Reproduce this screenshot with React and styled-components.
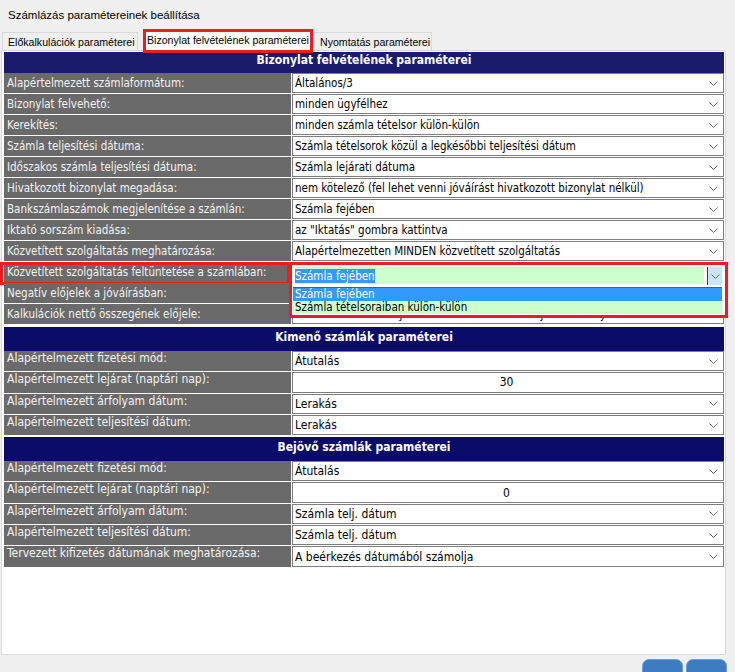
import React from 'react'
import styled, { createGlobalStyle } from 'styled-components'

const GlobalStyle = createGlobalStyle`
  html, body {
    margin: 0;
    padding: 0;
    background: #f0f0f0;
  }
  body {
    font-family: "Liberation Sans", Arial, sans-serif;
    color: #000;
  }
`

const tahoma = `"DejaVu Sans Condensed", "DejaVu Sans", sans-serif`

const invoiceRows = [
  ['Alapértelmezett számlaformátum:', 'Általános/3'],
  ['Bizonylat felvehető:', 'minden ügyfélhez'],
  ['Kerekítés:', 'minden számla tételsor külön-külön'],
  ['Számla teljesítési dátuma:', 'Számla tételsorok közül a legkésőbbi teljesítési dátum'],
  ['Időszakos számla teljesítési dátuma:', 'Számla lejárati dátuma'],
  ['Hivatkozott bizonylat megadása:', 'nem kötelező (fel lehet venni jóváírást hivatkozott bizonylat nélkül)'],
  ['Bankszámlaszámok megjelenítése a számlán:', 'Számla fejében'],
  ['Iktató sorszám kiadása:', 'az "Iktatás" gombra kattintva'],
  ['Közvetített szolgáltatás meghatározása:', 'Alapértelmezetten MINDEN közvetített szolgáltatás'],
  ['Közvetített szolgáltatás feltüntetése a számlában:', 'Számla fejében', 'open'],
  ['Negatív előjelek a jóváírásban:', ''],
  ['Kalkulációk nettő összegének előjele:', 'Minden kalkuláció kijelölhető a számlákba és a javító bizonylatokba'],
]

const outgoingRows = [
  ['Alapértelmezett fizetési mód:', 'Átutalás'],
  ['Alapértelmezett lejárat (naptári nap):', '30', 'number'],
  ['Alapértelmezett árfolyam dátum:', 'Lerakás'],
  ['Alapértelmezett teljesítési dátum:', 'Lerakás'],
]

const incomingRows = [
  ['Alapértelmezett fizetési mód:', 'Átutalás'],
  ['Alapértelmezett lejárat (naptári nap):', '0', 'number'],
  ['Alapértelmezett árfolyam dátum:', 'Számla telj. dátum'],
  ['Alapértelmezett teljesítési dátum:', 'Számla telj. dátum'],
  ['Tervezett kifizetés dátumának meghatározása:', 'A beérkezés dátumából számolja'],
]

const Chevron = () => (
  <svg width="9" height="5" viewBox="0 0 9 5">
    <polyline points="0.5,0.5 4.5,4.5 8.5,0.5" fill="none" stroke="#6a6a6a" strokeWidth="1" />
  </svg>
)

function ParamRow({ label, value, kind, narrowFont }) {
  const open = kind === 'open'
  return (
    <Row $narrow={narrowFont}>
      <Label $narrow={narrowFont}>
        {label}
        {open && <LabelMark />}
      </Label>
      {kind === 'number' ? (
        <Field $center>{value}</Field>
      ) : (
        <Field>
          <span>{open ? '' : value}</span>
          <Chevron />
        </Field>
      )}
      {open && (
        <OpenCombo>
          <ComboTop>
            <ComboEdit>
              <Selected>{value}</Selected>
            </ComboEdit>
            <ComboButton>
              <Chevron />
            </ComboButton>
          </ComboTop>
          <OptionList>
            <Option $active>Számla fejében</Option>
            <Option>Számla tételsoraiban külön-külön</Option>
          </OptionList>
        </OpenCombo>
      )}
    </Row>
  )
}

function App() {
  return (
    <Page>
      <GlobalStyle />
      <Title>Számlázás paramétereinek beállítása</Title>
      <TabBar>
        <Tab $w={136} $pad={5}>Előkalkulációk paraméterei</Tab>
        <Tab $w={170} $pad={1} $gap={5} $active>Bizonylat felvételének paraméterei</Tab>
        <Tab $w={119} $pad={6}>Nyomtatás paraméterei</Tab>
      </TabBar>
      <Panel>
        <SectionHead>Bizonylat felvételének paraméterei</SectionHead>
        <Rows>
          {invoiceRows.map(([l, v, k]) => (
            <ParamRow key={l} label={l} value={v} kind={k} />
          ))}
        </Rows>
        <SectionHead $narrow $mt={3}>Kimenő számlák paraméterei</SectionHead>
        <Rows $narrow>
          {outgoingRows.map(([l, v, k]) => (
            <ParamRow key={l} label={l} value={v} kind={k} narrowFont />
          ))}
        </Rows>
        <SectionHead $narrow $mt={2}>Bejövő számlák paraméterei</SectionHead>
        <Rows $narrow>
          {incomingRows.map(([l, v, k]) => (
            <ParamRow key={l} label={l} value={v} kind={k} narrowFont />
          ))}
        </Rows>
      </Panel>
      <Footer>
        <FooterButton />
        <FooterButton />
      </Footer>
    </Page>
  )
}

export default App

const Page = styled.div`
  width: 735px;
  overflow: hidden;
`

const Title = styled.div`
  height: 29px;
  padding-left: 8px;
  display: flex;
  align-items: center;
  font-size: 11.5px;
`

const TabBar = styled.div`
  display: flex;
  align-items: flex-end;
  height: 21px;
  padding-left: 2px;
  position: relative;
  z-index: 1;
`

const Tab = styled.div`
  box-sizing: border-box;
  width: ${p => p.$w}px;
  height: ${p => (p.$active ? 24 : 18)}px;
  margin-left: ${p => p.$gap || 0}px;
  margin-bottom: ${p => (p.$active ? -3 : 0)}px;
  padding-left: ${p => p.$pad}px;
  border: ${p => (p.$active ? '3px solid #ec1c24' : '1px solid #d9d9d9')};
  border-bottom: ${p => (p.$active ? '3px solid #ec1c24' : 'none')};
  background: ${p => (p.$active ? '#fff' : '#f0f0f0')};
  font-size: 10.6px;
  white-space: nowrap;
  overflow: hidden;
  display: flex;
  align-items: center;
  padding-bottom: ${p => (p.$active ? 2 : 0)}px;
`

const Panel = styled.div`
  box-sizing: border-box;
  margin-left: 1px;
  width: 725px;
  height: 605px;
  border: 1px solid #d9d9d9;
  background: #fff;
  padding: 1px 1px 0 2px;
  display: flex;
  flex-direction: column;
`

const SectionHead = styled.div`
  box-sizing: border-box;
  height: ${p => (p.$narrow ? 24 : 21)}px;
  margin-top: ${p => p.$mt || 0}px;
  padding-top: ${p => (p.$narrow ? 3 : 1)}px;
  background: ${p => (p.$narrow ? '#0b0b6a' : '#1b1b6c')};
  color: #fff;
  font-family: ${tahoma};
  font-size: 12px;
  font-weight: bold;
  line-height: 15px;
  text-align: center;
`

const Rows = styled.div`
  display: grid;
  grid-auto-rows: ${p => (p.$narrow ? 20.3 : 20)}px;
  row-gap: 1px;
`

const Row = styled.div`
  display: grid;
  grid-template-columns: 287px 1fr;
  column-gap: 1px;
  position: relative;
  font-family: ${tahoma};
  font-size: ${p => (p.$narrow ? 12 : 11.5)}px;
`

const Label = styled.div`
  position: relative;
  background: #6a6a6a;
  color: #f4f4f4;
  padding-left: 3px;
  display: flex;
  align-items: ${p => (p.$narrow ? 'flex-start' : 'center')};
  line-height: 15px;
  white-space: nowrap;
`

const LabelMark = styled.div`
  position: absolute;
  top: 0;
  left: -4px;
  right: 1px;
  height: 23px;
  box-sizing: border-box;
  border: 3px solid #ec1c24;
`

const Field = styled.div`
  box-sizing: border-box;
  border: 1px solid #7d7d7d;
  background: #fff;
  padding: 0 5px 0 2px;
  display: flex;
  align-items: center;
  justify-content: ${p => (p.$center ? 'center' : 'space-between')};
  white-space: nowrap;
  overflow: hidden;
`

const OpenCombo = styled.div`
  position: absolute;
  z-index: 2;
  top: 0;
  left: 285px;
  right: -4px;
  height: 56px;
  box-sizing: border-box;
  border: 3px solid #ec1c24;
  background: #fff;
  display: flex;
  flex-direction: column;
  font-family: ${tahoma};
  font-size: 11.5px;
`

const ComboTop = styled.div`
  display: flex;
  gap: 3px;
  height: 18px;
  margin: 2px 3px 0 3px;
`

const ComboEdit = styled.div`
  flex: 1;
  height: 17px;
  background: #ccffcc;
  display: flex;
  align-items: center;
`

const Selected = styled.span`
  background: #3399ff;
  color: #fff;
  line-height: 14px;
`

const ComboButton = styled.div`
  box-sizing: border-box;
  width: 15px;
  background: #cce4f7;
  border-left: 1px solid #3c3c3c;
  display: flex;
  align-items: center;
  justify-content: center;
`

const OptionList = styled.div`
  margin: 2px 3px 0 1px;
  border-top: 1px solid #5a5a5a;
  background: #ccffcc;
`

const Option = styled.div`
  height: 13px;
  line-height: 13px;
  padding-left: 2px;
  background: ${p => (p.$active ? '#3399ff' : '#ccffcc')};
  color: ${p => (p.$active ? '#fff' : '#000')};
  white-space: nowrap;
`

const Footer = styled.div`
  display: flex;
  justify-content: flex-end;
  gap: 3px;
  padding: 4px 8px 0 0;
`

const FooterButton = styled.div`
  width: 41px;
  height: 26px;
  border-radius: 7px;
  box-sizing: border-box;
  background: #3b7cc2;
  border: 1px solid #6d9fd3;
`
